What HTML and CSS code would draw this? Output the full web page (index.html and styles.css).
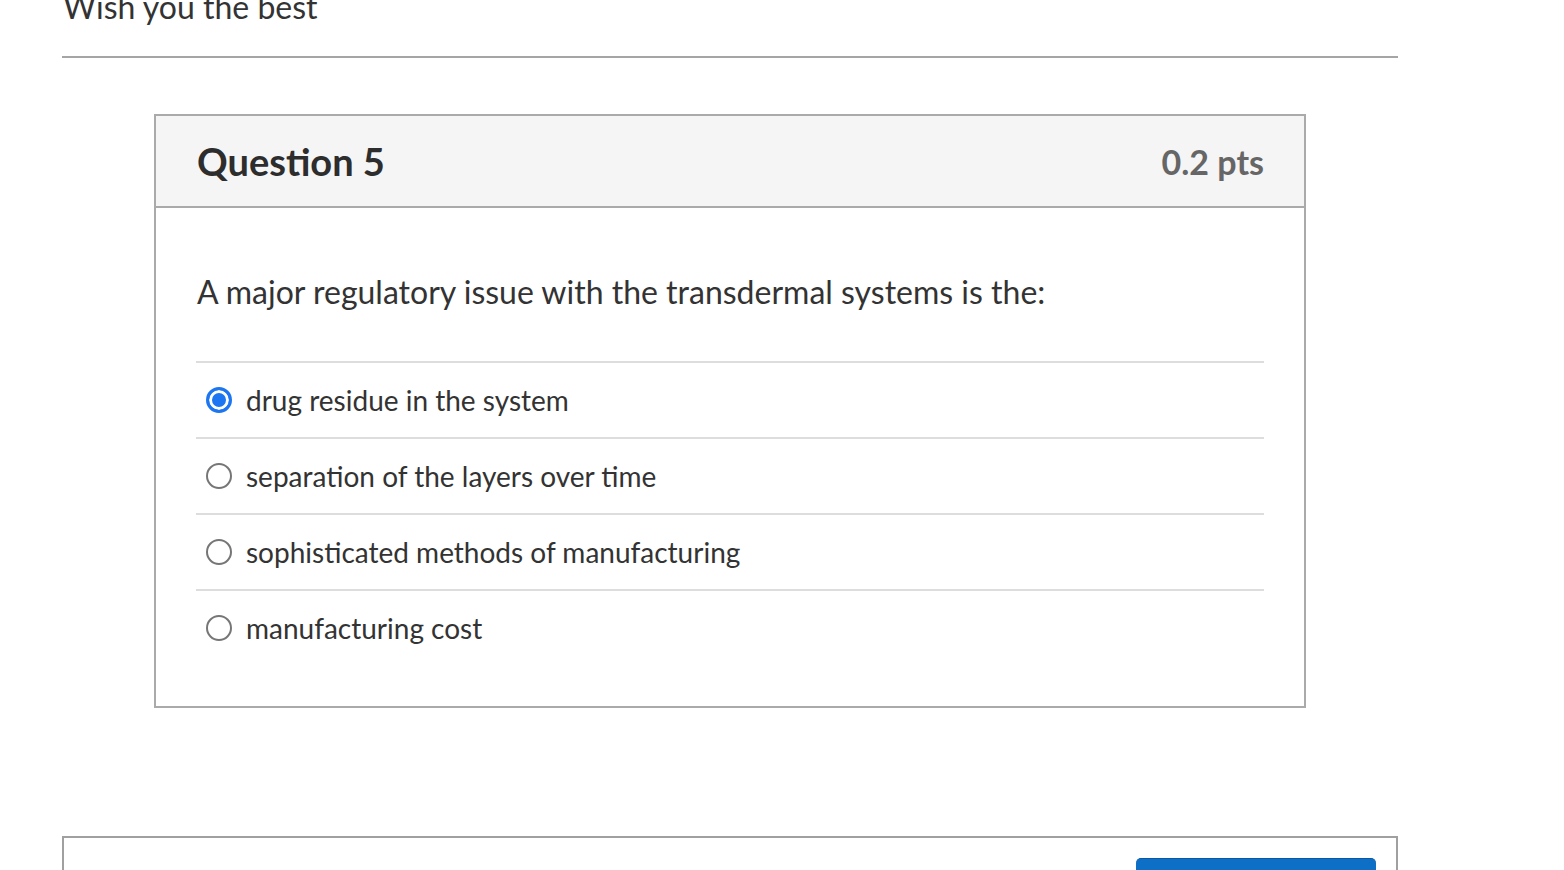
FILE: index.html
```html
<!DOCTYPE html>
<html lang="en">
<head>
<meta charset="utf-8">
<title>Quiz</title>
<link rel="stylesheet" href="styles.css">
</head>
<body>
<main class="page">
  <p class="intro">Wish you the best</p>
  <hr class="divider">
  <section class="question">
    <header class="q-header">
      <h2 class="q-title">Question 5</h2>
      <span class="q-pts">0.2 pts</span>
    </header>
    <div class="q-body">
      <p class="q-text">A major regulatory issue with the transdermal systems is the:</p>
      <div class="answers">
        <label class="answer"><input class="radio" type="radio" name="q5" checked><span>drug residue in the system</span></label>
        <label class="answer"><input class="radio" type="radio" name="q5"><span>separation of the layers over time</span></label>
        <label class="answer"><input class="radio" type="radio" name="q5"><span>sophisticated methods of manufacturing</span></label>
        <label class="answer"><input class="radio" type="radio" name="q5"><span>manufacturing cost</span></label>
      </div>
    </div>
  </section>
  <section class="footer-box">
    <button class="submit" type="button"></button>
  </section>
</main>
</body>
</html>
```
FILE: styles.css
```css
html, body {
  margin: 0;
  padding: 0;
  background: #fff;
  overflow: hidden;
}
body {
  font-family: Lato, "Open Sans", sans-serif;
  color: #333;
}
.page {
  margin-left: 62px;
  width: 1336px;
}
.intro {
  margin: -13px 0 0 1px;
  font-size: 32px;
  line-height: 40px;
  color: #333;
}
.divider {
  margin: 29px 0 0;
  border: 0;
  border-top: 2px solid #a5a5a5;
  height: 0;
}
.question {
  margin: 56px 0 0 92px;
  width: 1148px;
  border: 2px solid #aaa;
}
.q-header {
  display: flex;
  justify-content: space-between;
  align-items: center;
  height: 90px;
  padding: 0 40px 0 41px;
  background: #f5f5f5;
  border-bottom: 2px solid #aaa;
}
.q-title {
  margin: 0;
  font-size: 38px;
  font-weight: 700;
  color: #2d2d2d;
}
.q-pts {
  font-size: 34px;
  font-weight: 700;
  color: #666;
}
.q-body {
  padding: 40px 40px 41px 40px;
}
.q-text {
  margin: 22px 0 47px 1px;
  font-size: 32px;
  line-height: 44px;
  color: #333;
}
.answer {
  display: flex;
  align-items: center;
  height: 74px;
  border-top: 2px solid #ddd;
  font-size: 28px;
  color: #333;
}
.radio {
  appearance: none;
  -webkit-appearance: none;
  box-sizing: border-box;
  width: 26px;
  height: 26px;
  margin: 0 14px 0 10px;
  border: 2px solid #767676;
  border-radius: 50%;
  background: #fff;
}
.radio:checked {
  border: 3px solid #1c76f2;
  background: #1c76f2;
  box-shadow: inset 0 0 0 3px #fff;
}
.footer-box {
  margin-top: 128px;
  height: 80px;
  border: 2px solid #a0a0a0;
  display: flex;
  justify-content: flex-end;
  padding: 20px 20px 0 0;
}
.submit {
  width: 240px;
  height: 60px;
  background: #0e6fc7;
  border: 0;
  border-top: 1px solid #0a58a4;
  border-radius: 5px;
}
```
